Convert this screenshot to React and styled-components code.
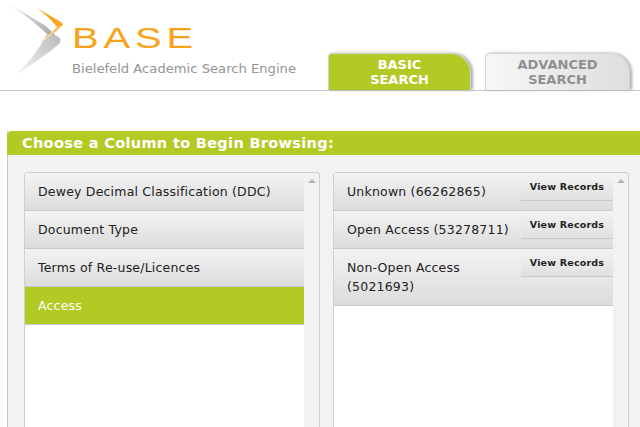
import styled, { createGlobalStyle } from "styled-components";

const Global = createGlobalStyle`
  html, body { margin: 0; padding: 0; background: #fff; height: 427px; overflow: hidden; }
  body { font-family: "DejaVu Sans", Verdana, sans-serif; }
`;

const Page = styled.div`
  width: 640px;
  height: 427px;
  overflow: hidden;
`;

const Header = styled.header`
  height: 90px;
  border-bottom: 1px solid #c8c8c8;
  display: flex;
  justify-content: space-between;
`;

const Logo = styled.svg`
  width: 310px;
  height: 90px;
  display: block;
`;

const Tabs = styled.nav`
  display: flex;
  align-items: flex-end;
  gap: 14px;
  padding-right: 10px;
`;

const Tab = styled.a`
  width: ${(p) => p.$w}px;
  height: 37px;
  box-sizing: border-box;
  padding-top: 3px;
  text-align: center;
  font-size: 13px;
  line-height: 15px;
  font-weight: bold;
  border: 1px solid #d4d4d4;
  border-bottom: none;
  border-radius: 4px 20px 0 0;
  box-shadow: 2px 0 3px #aaa;
  color: ${(p) => (p.$active ? "#fff" : "#918e93")};
  background: ${(p) =>
    p.$active ? "#b3ca24" : "linear-gradient(90deg, #f7f7f7, #dedede)"};
`;

const Panel = styled.section`
  margin: 40px 0 0 7px;
  height: 297px;
  background: #f2f2f2;
  border-left: 1px solid #c8c8c8;
`;

const PanelTitle = styled.h2`
  margin: 0 0 0 -1px;
  height: 24px;
  padding-left: 15px;
  background: #b3ca24;
  border-radius: 5px 0 0 0;
  color: #fff;
  font-size: 14.5px;
  line-height: 25px;
  letter-spacing: 0.33px;
  font-weight: bold;
`;

const Columns = styled.div`
  display: flex;
  gap: 13px;
  padding: 17px 0 0 16px;
`;

const Column = styled.div`
  width: 296px;
  height: 300px;
  box-sizing: border-box;
  display: flex;
  background: #f2f2f2;
  border: 1px solid #cfcfcf;
  border-radius: 3px 3px 0 0;
`;

const List = styled.div`
  flex: 1;
  background: #fff;
`;

const Scrollbar = styled.div`
  width: 15px;
  display: flex;
  justify-content: center;
  padding-top: 6px;
  box-sizing: border-box;
`;

const UpArrow = styled.span`
  width: 0;
  height: 0;
  border-left: 4px solid transparent;
  border-right: 4px solid transparent;
  border-bottom: 4px solid #b4b4b4;
`;

const Row = styled.div`
  height: ${(p) => p.$h || 38}px;
  box-sizing: border-box;
  display: flex;
  justify-content: space-between;
  align-items: flex-start;
  font-size: 12.5px;
  line-height: 19px;
  letter-spacing: 0.2px;
  color: ${(p) => (p.$active ? "#fff" : "#222")};
  background: ${(p) =>
    p.$active ? "#b3ca24" : "linear-gradient(180deg, #f3f3f3, #dcdcdc)"};
  border-bottom: 1px solid #c9c9c9;
`;

const Label = styled.span`
  box-sizing: border-box;
  padding: 9px 0 0 13px;
  width: ${(p) => p.$w || 250}px;
`;

const ViewButton = styled.button`
  width: 92px;
  height: 28px;
  padding: 0;
  border: none;
  border-bottom: 1px solid #c9c9c9;
  background: linear-gradient(180deg, #f3f3f3, #e0e0e0);
  color: #222;
  font-family: inherit;
  font-size: 9.5px;
  font-weight: bold;
  letter-spacing: 0.2px;
`;

const subjects = [
  "Dewey Decimal Classification (DDC)",
  "Document Type",
  "Terms of Re-use/Licences",
  "Access",
];

const records = [
  { text: "Unknown (66262865)", h: 38 },
  { text: "Open Access (53278711)", h: 38 },
  { text: "Non-Open Access (5021693)", h: 57 },
];

function BaseLogo() {
  return (
    <Logo viewBox="0 0 310 90">
      <defs>
        <linearGradient id="greyTop" x1="0" y1="0" x2="1" y2="1">
          <stop offset="0" stopColor="#ececec" />
          <stop offset="1" stopColor="#a6a6a6" />
        </linearGradient>
        <linearGradient id="greyBottom" x1="1" y1="0" x2="0" y2="1">
          <stop offset="0" stopColor="#b8b8b8" />
          <stop offset="1" stopColor="#f6f6f6" />
        </linearGradient>
        <linearGradient id="orangeBottom" x1="1" y1="0" x2="0" y2="1">
          <stop offset="0" stopColor="#f9b44a" />
          <stop offset="1" stopColor="#fdeccd" />
        </linearGradient>
      </defs>
      <path d="M9 4 L46 26 L56 36 L47 34 Q30 18 9 4Z" fill="url(#greyTop)" />
      <path d="M47 34 L57 36 Q63 39 59 44 Q40 60 15 75 Q34 59 47 34Z" fill="url(#greyBottom)" />
      <path d="M37 8 L61 22 Q64 24 62 26 L57 27 Q49 17 37 8Z" fill="#f9a91f" />
      <path d="M62 26 Q52 36 38 44 Q49 35 57 27Z" fill="url(#orangeBottom)" />
      <text
        transform="translate(72 48) scale(1.38 1)"
        fontFamily="'Liberation Sans', sans-serif"
        fontSize="29"
        letterSpacing="3.5"
        fill="#f9a21b"
      >
        BASE
      </text>
      <text
        x="72"
        y="73"
        fontFamily="'DejaVu Sans', sans-serif"
        fontSize="12.5"
        fill="#949494"
        textLength="224"
        lengthAdjust="spacingAndGlyphs"
      >
        Bielefeld Academic Search Engine
      </text>
    </Logo>
  );
}

export default function App() {
  return (
    <Page>
      <Global />
      <Header>
        <BaseLogo />
        <Tabs>
          <Tab $active $w={143}>BASIC<br />SEARCH</Tab>
          <Tab $w={145}>ADVANCED<br />SEARCH</Tab>
        </Tabs>
      </Header>
      <Panel>
        <PanelTitle>Choose a Column to Begin Browsing:</PanelTitle>
        <Columns>
          <Column>
            <List>
              {subjects.map((s) => (
                <Row key={s} $active={s === "Access"}>
                  <Label>{s}</Label>
                </Row>
              ))}
            </List>
            <Scrollbar><UpArrow /></Scrollbar>
          </Column>
          <Column>
            <List>
              {records.map((r) => (
                <Row key={r.text} $h={r.h}>
                  <Label $w={187}>{r.text}</Label>
                  <ViewButton>View Records</ViewButton>
                </Row>
              ))}
            </List>
            <Scrollbar><UpArrow /></Scrollbar>
          </Column>
        </Columns>
      </Panel>
    </Page>
  );
}
